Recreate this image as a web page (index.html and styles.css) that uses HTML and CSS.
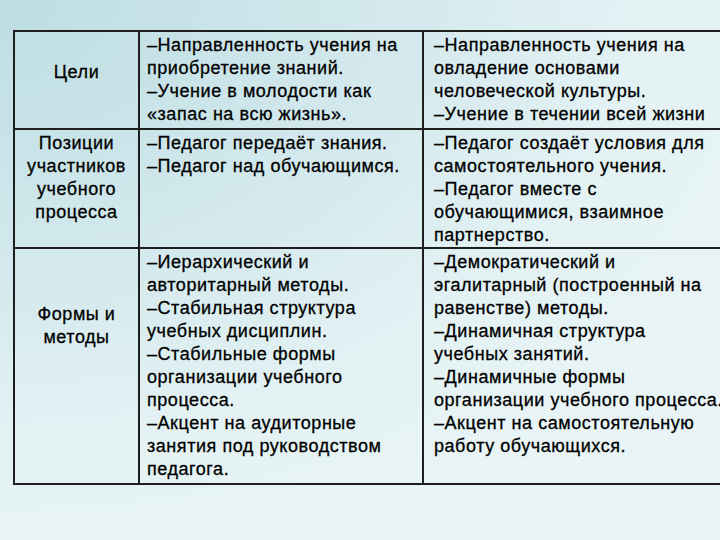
FILE: index.html
```html
<!DOCTYPE html>
<html lang="ru">
<head>
<meta charset="utf-8">
<title>Сравнение подходов</title>
<link rel="stylesheet" href="styles.css">
</head>
<body>
<div class="slide">
  <table class="compare">
    <colgroup>
      <col class="c1">
      <col class="c2">
      <col class="c3">
    </colgroup>
    <tr class="r1">
      <th class="label pad1">Цели</th>
      <td class="mid">
        <p>–Направленность учения на<br>приобретение знаний.</p>
        <p>–Учение в молодости как<br>«запас на всю жизнь».</p>
      </td>
      <td class="right">
        <p>–Направленность учения на<br>овладение основами<br>человеческой культуры.</p>
        <p>–Учение в течении всей жизни</p>
      </td>
    </tr>
    <tr class="r2">
      <th class="label pad2">Позиции<br>участников<br>учебного<br>процесса</th>
      <td class="mid">
        <p>–Педагог передаёт знания.</p>
        <p>–Педагог над обучающимся.</p>
      </td>
      <td class="right">
        <p>–Педагог создаёт условия для<br>самостоятельного учения.</p>
        <p>–Педагог вместе с<br>обучающимися, взаимное<br>партнерство.</p>
      </td>
    </tr>
    <tr class="r3">
      <th class="label pad3">Формы и<br>методы</th>
      <td class="mid">
        <p>–Иерархический и<br>авторитарный методы.</p>
        <p>–Стабильная структура<br>учебных дисциплин.</p>
        <p>–Стабильные формы<br>организации учебного<br>процесса.</p>
        <p>–Акцент на аудиторные<br>занятия под руководством<br>педагога.</p>
      </td>
      <td class="right">
        <p>–Демократический и<br>эгалитарный (построенный на<br>равенстве) методы.</p>
        <p>–Динамичная структура<br>учебных занятий.</p>
        <p>–Динамичные формы<br>организации учебного процесса.</p>
        <p>–Акцент на самостоятельную<br>работу обучающихся.</p>
      </td>
    </tr>
  </table>
</div>
</body>
</html>
```

FILE: styles.css
```css
html, body {
  margin: 0;
  padding: 0;
}

body {
  width: 720px;
  height: 540px;
  overflow: hidden;
}

.slide {
  width: 720px;
  height: 540px;
  overflow: hidden;
  box-sizing: border-box;
  padding: 30px 0 0 13px;
  background: radial-gradient(ellipse 120% 110% at 0% 0%, #bddde3 0%, #d3e9ed 45%, #e4f2f4 75%, #e9f4f6 100%);
  font-family: "Liberation Sans", Arial, sans-serif;
  font-size: 18px;
  letter-spacing: 0.55px;
  color: #000;
  -webkit-text-stroke: 0.3px #000;
}

.compare {
  border-collapse: collapse;
  table-layout: fixed;
  width: 720px;
}

.c1 { width: 125px; }
.c2 { width: 284px; }
.c3 { width: 311px; }

.compare th,
.compare td {
  border: 2px solid #1e1e1e;
  vertical-align: top;
  line-height: 23px;
  white-space: nowrap;
}

.r1 { height: 98px; }
.r2 { height: 119px; }
.r3 { height: 236px; }

.compare .label {
  font-weight: normal;
  text-align: center;
  padding: 2px 0 0 0;
}

.compare .pad1 { padding-top: 29px; }
.compare .pad2 { padding-top: 2px; }
.compare .pad3 { padding-top: 54px; }

.compare .mid { padding: 2px 0 0 7px; }
.compare .right { padding: 2px 0 0 10px; }

.compare p {
  margin: 0;
}
```
